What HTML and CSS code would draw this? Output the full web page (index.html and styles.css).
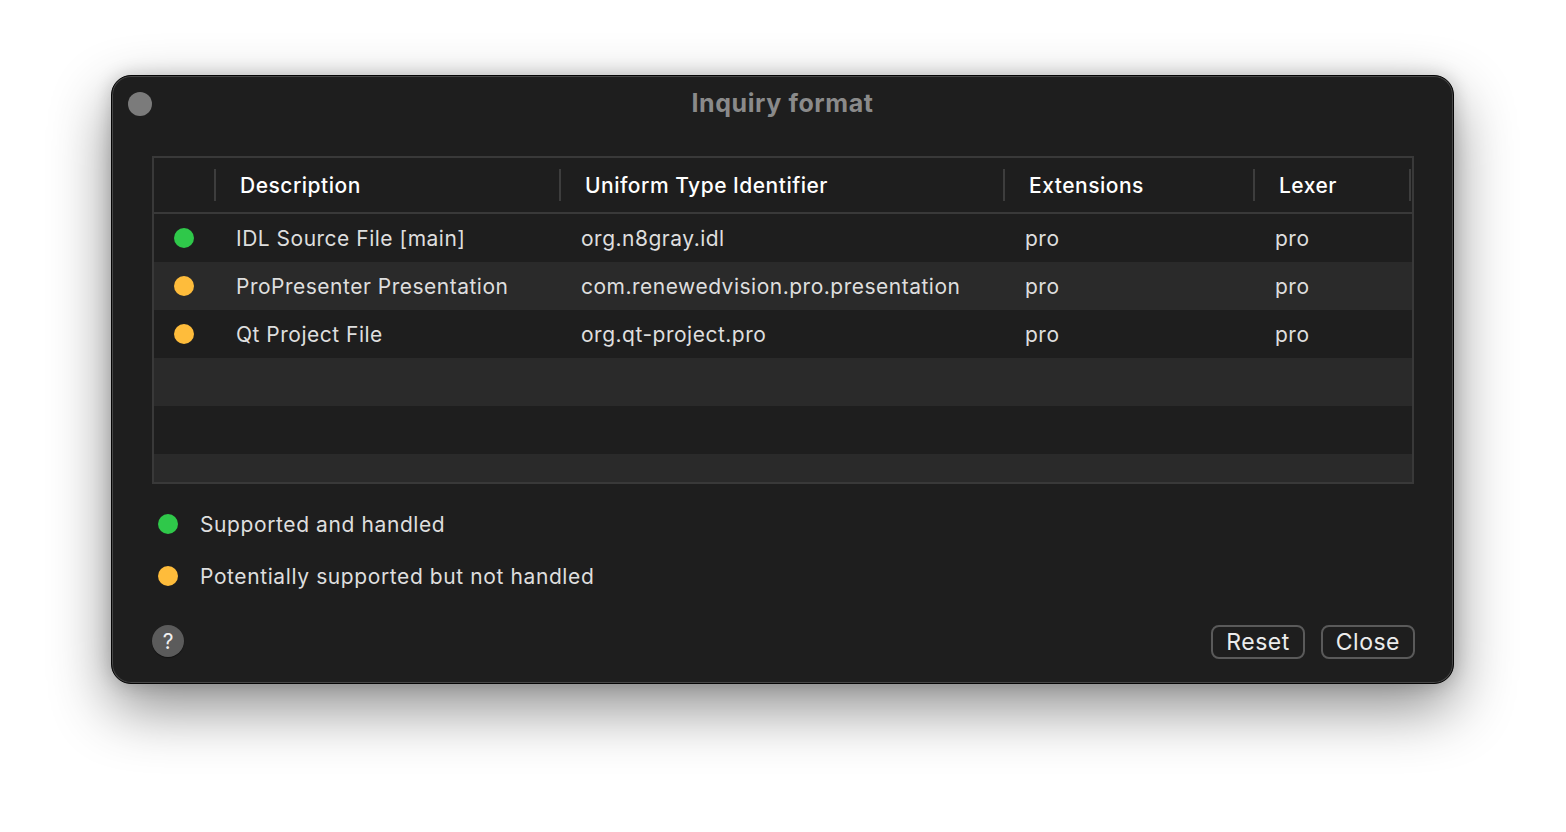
FILE: index.html
```html
<!DOCTYPE html>
<html lang="en">
<head>
<meta charset="utf-8">
<title>Inquiry format</title>
<link rel="stylesheet" href="styles.css">
</head>
<body>
<div class="window">
  <div class="titlebar">
    <span class="traffic"></span>
    <div class="title">Inquiry format</div>
  </div>
  <div class="content">
    <div class="table">
      <div class="thead">
        <div class="th th-dot"></div>
        <div class="th">Description</div>
        <div class="th">Uniform Type Identifier</div>
        <div class="th">Extensions</div>
        <div class="th">Lexer</div>
        <div class="th th-end"></div>
      </div>
      <div class="tbody">
        <div class="tr">
          <div class="td td-dot"><span class="dot green"></span></div>
          <div class="td">IDL Source File [main]</div>
          <div class="td">org.n8gray.idl</div>
          <div class="td">pro</div>
          <div class="td">pro</div>
          <div class="td"></div>
        </div>
        <div class="tr alt">
          <div class="td td-dot"><span class="dot orange"></span></div>
          <div class="td">ProPresenter Presentation</div>
          <div class="td">com.renewedvision.pro.presentation</div>
          <div class="td">pro</div>
          <div class="td">pro</div>
          <div class="td"></div>
        </div>
        <div class="tr">
          <div class="td td-dot"><span class="dot orange"></span></div>
          <div class="td">Qt Project File</div>
          <div class="td">org.qt-project.pro</div>
          <div class="td">pro</div>
          <div class="td">pro</div>
          <div class="td"></div>
        </div>
        <div class="tr alt"></div>
        <div class="tr"></div>
        <div class="tr alt"></div>
      </div>
    </div>
    <div class="legend">
      <div class="legend-row"><span class="dot green"></span><span class="legend-text">Supported and handled</span></div>
      <div class="legend-row"><span class="dot orange"></span><span class="legend-text">Potentially supported but not handled</span></div>
    </div>
    <div class="footer">
      <button class="help">?</button>
      <div class="buttons">
        <button class="btn">Reset</button>
        <button class="btn">Close</button>
      </div>
    </div>
  </div>
</div>
</body>
</html>
```
FILE: styles.css
```css
html, body {
  margin: 0;
  padding: 0;
  background: #ffffff;
}
body {
  width: 1566px;
  height: 832px;
  padding: 75px 0 0 111px;
  box-sizing: border-box;
  font-family: Inter, "Noto Sans", "Liberation Sans", sans-serif;
  overflow: hidden;
}
.window {
  width: 1343px;
  height: 609px;
  box-sizing: border-box;
  border: 1px solid #050505;
  border-radius: 20px;
  background: #1e1e1e;
  box-shadow: inset 0 0 0 1px #474747, 0 24px 60px rgba(0, 0, 0, 0.45), 0 0 18px rgba(0, 0, 0, 0.18);
  display: flex;
  flex-direction: column;
}
.titlebar {
  height: 56px;
  display: flex;
  align-items: center;
  justify-content: center;
  padding: 0 16px;
  position: relative;
}
.traffic {
  position: absolute;
  left: 16px;
  top: 16px;
  width: 24px;
  height: 24px;
  border-radius: 50%;
  background: #7b7b7b;
}
.title {
  font-size: 25px;
  font-weight: 700;
  color: #8a8a8a;
  letter-spacing: 0.6px;
  margin-top: -2px;
}
.content {
  padding: 24px 0 0 40px;
  display: flex;
  flex-direction: column;
}
.table {
  width: 1262px;
  height: 328px;
  box-sizing: border-box;
  border: 2px solid #393939;
  display: flex;
  flex-direction: column;
  overflow: hidden;
}
.thead, .tr {
  display: grid;
  grid-template-columns: 60px 345px 444px 250px 156px 3px;
}
.thead {
  height: 56px;
  box-sizing: border-box;
  border-bottom: 2px solid #393939;
  align-items: center;
}
.th {
  height: 32px;
  box-sizing: border-box;
  border-left: 2px solid #3d3d3d;
  padding-left: 24px;
  display: flex;
  align-items: center;
  font-size: 21px;
  letter-spacing: 0.5px;
  font-weight: 500;
  color: #ffffff;
  white-space: nowrap;
}
.th-dot {
  border-left: none;
}
.th-end {
  padding: 0;
}
.tbody {
  flex: 1;
  overflow: hidden;
}
.tr {
  height: 48px;
  background: #1e1e1e;
}
.tr.alt {
  background: #2a2a2a;
}
.td {
  display: flex;
  align-items: center;
  padding-left: 22px;
  font-size: 21px;
  letter-spacing: 0.5px;
  color: #dedede;
  white-space: nowrap;
}
.td-dot {
  padding-left: 0;
  justify-content: center;
}
.dot {
  width: 20px;
  height: 20px;
  border-radius: 50%;
  display: inline-block;
  flex: none;
}
.dot.green { background: #2fc84a; }
.dot.orange { background: #febc3b; }
.legend {
  margin-top: 20px;
  padding-left: 6px;
  display: flex;
  flex-direction: column;
  gap: 12px;
}
.legend-row {
  height: 40px;
  display: flex;
  align-items: center;
  gap: 22px;
}
.legend-text {
  font-size: 21px;
  letter-spacing: 0.6px;
  color: #dedede;
}
.footer {
  margin-top: 29px;
  width: 1262px;
  height: 34px;
  display: flex;
  align-items: center;
  justify-content: space-between;
}
.help {
  width: 32px;
  height: 32px;
  border-radius: 50%;
  border: none;
  background: #5b5b5b;
  color: #f0f0f0;
  font-family: inherit;
  font-size: 21px;
  padding: 0;
  margin-top: -2px;
  box-shadow: 0 1px 1px rgba(0,0,0,0.4);
}
.buttons {
  display: flex;
  gap: 16px;
  margin-right: -1px;
}
.btn {
  height: 34px;
  box-sizing: border-box;
  border: 2px solid #5a5a5a;
  border-radius: 8px;
  background: #1e1e1e;
  color: #ececec;
  font-family: inherit;
  font-size: 23px;
  letter-spacing: 0.5px;
  padding: 0 13px;
  line-height: 28px;
}
```
